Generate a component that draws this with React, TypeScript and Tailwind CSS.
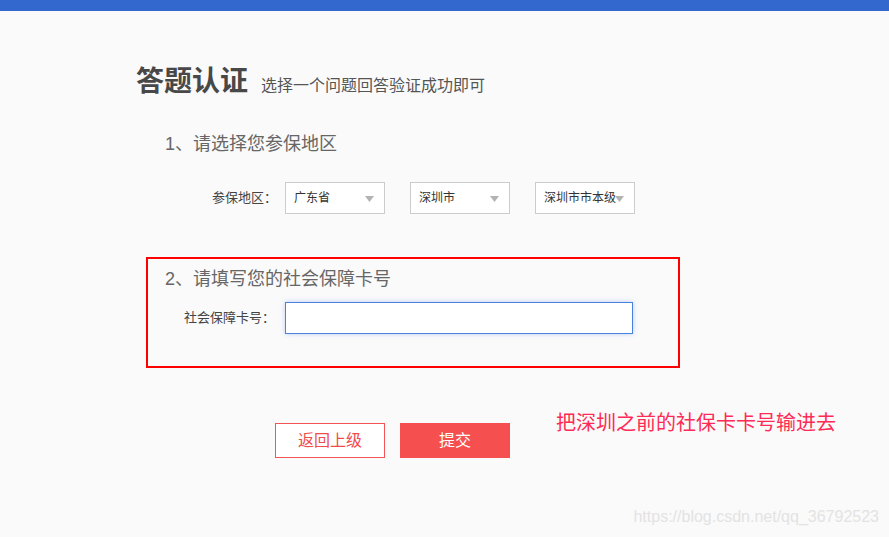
const font = "font-['Liberation_Sans','Noto_Sans_CJK_SC',sans-serif]";

function Select({ label }: { label: string }) {
  return (
    <div className="relative flex h-[32px] w-[100px] items-center border border-[#cccccc] bg-white pl-[8px] text-[12px] text-[#333]">
      <span className="whitespace-nowrap">{label}</span>
      <svg className="absolute right-[10px] top-[13px]" width="9" height="6" viewBox="0 0 9 6">
        <path d="M0 0h9L4.5 6z" fill="#b3b3b3" />
      </svg>
    </div>
  );
}

export default function App() {
  return (
    <div className={`relative min-h-[537px] w-full bg-[#fafafa] ${font}`}>
      <div className="h-[11px] bg-[#3369ce]" />

      <div className="pl-[136px]">
        <div className="mt-[57px] flex items-baseline">
          <h1 className="text-[28px] font-bold leading-[28px] text-[#484848]">答题认证</h1>
          <span className="ml-[13px] text-[16px] leading-[16px] text-[#555]">选择一个问题回答验证成功即可</span>
        </div>

        <p className="mt-[39px] pl-[29px] text-[18px] leading-[18px] text-[#666]">1、请选择您参保地区</p>

        <div className="mt-[29px] flex items-center">
          <span className="w-[141px] text-right text-[13px] text-[#444]">参保地区：</span>
          <div className="ml-[8px] flex gap-[25px]">
            <Select label="广东省" />
            <Select label="深圳市" />
            <Select label="深圳市市本级" />
          </div>
        </div>

        <div className="ml-[10px] mt-[43px] h-[111px] w-[534px] border-2 border-[#ff0000] pt-[11px]">
          <p className="pl-[17px] text-[18px] leading-[18px] text-[#666]">2、请填写您的社会保障卡号</p>
          <div className="mt-[14px] flex items-center">
            <span className="w-[127px] text-right text-[13px] text-[#444]">社会保障卡号：</span>
            <input
              className="ml-[10px] h-[32px] w-[348px] border border-[#4a80e0] bg-white shadow-[0_0_5px_rgba(74,128,224,0.35)] outline-none"
              type="text"
            />
          </div>
        </div>

        <div className="ml-[139px] mt-[55px] flex items-start">
          <button className="h-[35px] w-[110px] border border-[#f15555] bg-white text-[16px] text-[#f04c4c]">返回上级</button>
          <button className="ml-[15px] h-[35px] w-[110px] bg-[#f64f4f] text-[16px] text-white">提交</button>
          <span className="ml-[46px] mt-[-10px] text-[20px] leading-[20px] text-[#ff2a55]">把深圳之前的社保卡卡号输进去</span>
        </div>
      </div>

      <span className="absolute bottom-[8px] right-[10px] text-[16px] text-[#e3e3e3]">https://blog.csdn.net/qq_36792523</span>
    </div>
  );
}
